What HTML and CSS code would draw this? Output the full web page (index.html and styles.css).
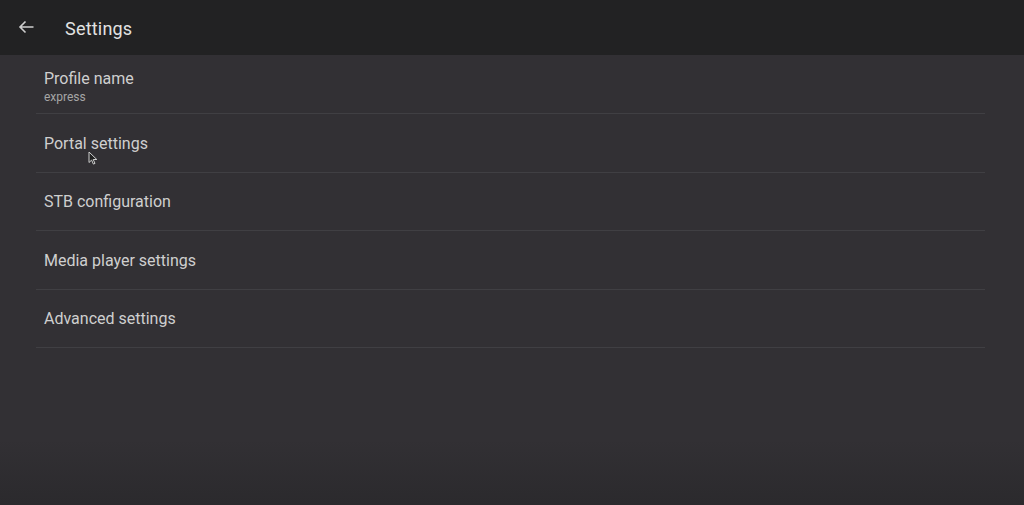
FILE: index.html
```html
<!DOCTYPE html>
<html>
<head>
<meta charset="utf-8">
<link rel="stylesheet" href="styles.css">
</head>
<body>
<div class="app">
  <header class="toolbar">
    <svg class="back" width="16" height="14" viewBox="0 0 16 14"><path d="M15.5 7H2M7.5 1.5L2 7l5.5 5.5" fill="none" stroke="#cfcfcf" stroke-width="1.6"/></svg>
    <span class="title">Settings</span>
  </header>
  <main class="list">
    <div class="item first">
      <div class="name">Profile name</div>
      <div class="summary">express</div>
    </div>
    <div class="item"><div class="name">Portal settings</div></div>
    <div class="item"><div class="name">STB configuration</div></div>
    <div class="item"><div class="name">Media player settings</div></div>
    <div class="item"><div class="name">Advanced settings</div></div>
  </main>
  <svg class="cursor" width="10" height="14" viewBox="0 0 10 14"><path d="M1 1v10.5l2.6-2.4 1.8 4 1.6-.7-1.8-3.9H8.8z" fill="#222" stroke="#cfcfcf" stroke-width="1"/></svg>
</div>
</body>
</html>
```
FILE: styles.css
```css
html, body { margin: 0; padding: 0; }
body {
  width: 1024px; height: 505px; overflow: hidden;
  font-family: Roboto, "Noto Sans", sans-serif;
}
.app {
  position: relative;
  height: 505px;
  background: linear-gradient(to bottom, #323034 0, #323034 440px, #2b2a2d 505px);
  display: flex; flex-direction: column;
}
.toolbar {
  height: 55px; flex: none;
  background: #222223;
  display: flex; align-items: center;
  box-sizing: border-box;
  padding-left: 18px;
}
.back { margin-right: 31px; margin-top: -1px; }
.title { color: #e2e2e2; font-size: 18px; font-weight: 400; letter-spacing: 0.2px; margin-top: 1px; }
.list { margin-left: 36px; width: 949px; }
.item {
  height: 57.5px;
  border-bottom: 1px solid #403f43;
  display: flex; flex-direction: column; justify-content: center;
  padding-left: 8px;
  padding-top: 1px; box-sizing: content-box;
}
.item + .item { height: 56.5px; padding-top: 1px; }
.item.first { height: 54px; padding-top: 4px; }
.name { color: #cfcfcf; font-size: 16px; line-height: 19px; }
.summary { color: #a6a6a6; font-size: 12px; line-height: 14px; margin-top: 2px; }
.cursor { position: absolute; left: 88px; top: 151px; }
```
